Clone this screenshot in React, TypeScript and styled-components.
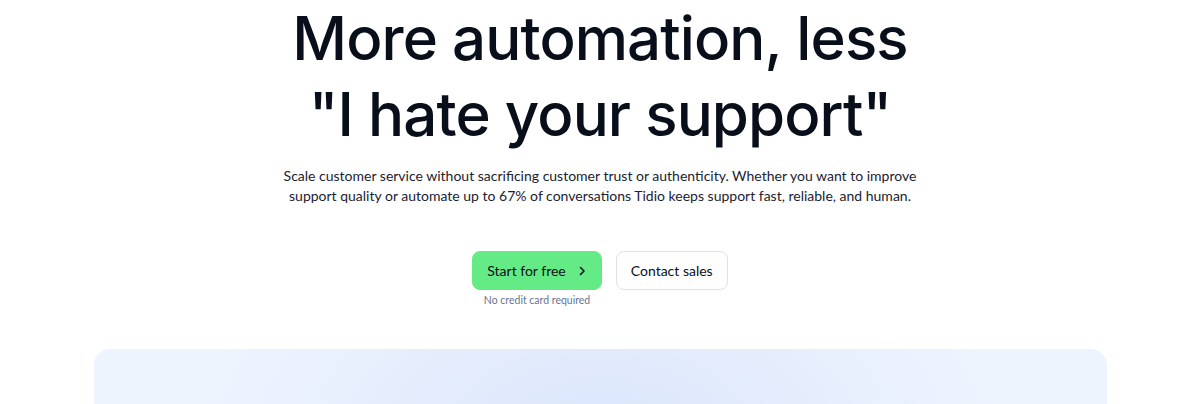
import * as React from 'react';
import styled, { createGlobalStyle } from 'styled-components';

const GlobalStyle = createGlobalStyle`
  html, body {
    margin: 0;
    padding: 0;
    background: #ffffff;
  }
  body {
    font-family: 'Lato', 'Noto Sans', sans-serif;
    color: #080f1a;
    -webkit-font-smoothing: antialiased;
  }
`;

const Hero = styled.section`
  display: flex;
  flex-direction: column;
  align-items: center;
`;

const Title = styled.h1`
  margin: 0;
  font-family: 'Inter', sans-serif;
  font-weight: 500;
  font-size: 60px;
  line-height: 76px;
  letter-spacing: -0.9px;
  text-align: center;
  color: #080f1a;
`;

const Lead = styled.p`
  margin: 14px 0 0;
  font-size: 14px;
  line-height: 20px;
  text-align: center;
  white-space: nowrap;
  color: #1b2230;
`;

const Actions = styled.div`
  display: flex;
  gap: 14px;
  margin-top: 45px;
  align-items: flex-start;
`;

const PrimaryCol = styled.div`
  display: flex;
  flex-direction: column;
  align-items: center;
`;

const Button = styled.button<{ $primary?: boolean }>`
  height: 39px;
  display: inline-flex;
  align-items: center;
  gap: 10px;
  padding: ${p => (p.$primary ? '0 13px 0 14px' : '0 14px')};
  border-radius: 8px;
  border: 1px solid ${p => (p.$primary ? '#65eb85' : '#dde2ea')};
  background: ${p => (p.$primary ? '#65eb85' : '#ffffff')};
  color: #080f1a;
  font-family: inherit;
  font-size: 14px;
  cursor: pointer;
  svg {
    width: 12px;
    height: 12px;
  }
`;

const Hint = styled.span`
  margin-top: 4px;
  font-size: 10.5px;
  color: #69758f;
`;

const Showcase = styled.div`
  margin: 43px 93px 0 94px;
  height: 200px;
  border-radius: 16px;
  background:
    radial-gradient(ellipse 400px 220px at 50% 40%, #dbe6fb 0%, rgba(224, 233, 252, 0.6) 55%, rgba(238, 244, 254, 0) 100%),
    #eef4fe;
`;

const App: React.FC = () => {
  return (
    <>
      <GlobalStyle />
      <Hero>
        <Title>
          More automation, less
          <br />
          "I hate your support"
        </Title>
        <Lead>
          Scale customer service without sacrificing customer trust or authenticity. Whether you want to improve
          <br />
          support quality or automate up to 67% of conversations Tidio keeps support fast, reliable, and human.
        </Lead>
        <Actions>
          <PrimaryCol>
            <Button $primary>
              Start for free
              <svg viewBox="0 0 12 12" fill="none" stroke="#080f1a" strokeWidth="1.6" strokeLinecap="round" strokeLinejoin="round">
                <path d="M4.5 2.5 8 6l-3.5 3.5" />
              </svg>
            </Button>
            <Hint>No credit card required</Hint>
          </PrimaryCol>
          <Button>Contact sales</Button>
        </Actions>
      </Hero>
      <Showcase />
    </>
  );
};

export default App;
